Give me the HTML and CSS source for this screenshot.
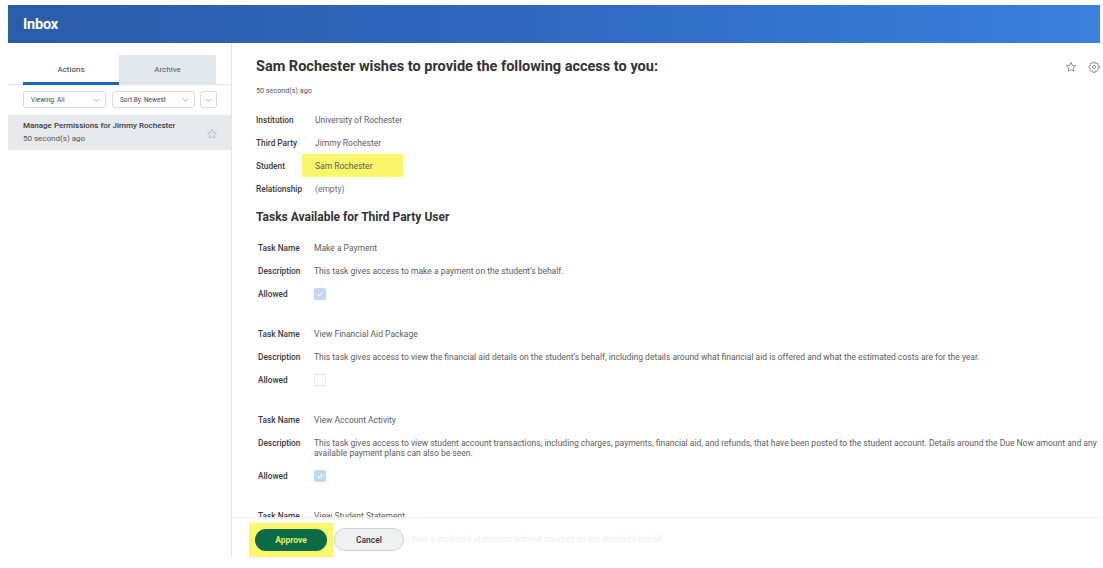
FILE: index.html
```html
<!DOCTYPE html>
<html>
<head>
<meta charset="utf-8">
<link rel="stylesheet" href="styles.css">
</head>
<body>
<div class="frame">
  <header class="topbar"><span class="brand">Inbox</span></header>
  <div class="layout">
    <aside class="sidebar">
      <div class="tabs">
        <div class="tab active">Actions</div>
        <div class="tab">Archive</div>
      </div>
      <div class="filters">
        <div class="select wide"><span>Viewing: All</span><svg viewBox="0 0 10 6"><path d="M1 1l4 4 4-4"/></svg></div>
        <div class="select wide"><span>Sort By: Newest</span><svg viewBox="0 0 10 6"><path d="M1 1l4 4 4-4"/></svg></div>
        <div class="select small"><svg viewBox="0 0 10 6"><path d="M1 1l4 4 4-4"/></svg></div>
      </div>
      <div class="item">
        <div class="item-text">
          <div class="item-title">Manage Permissions for Jimmy Rochester</div>
          <div class="item-sub">50 second(s) ago</div>
        </div>
        <svg class="star" viewBox="0 0 24 24"><path d="M12 2.8l2.8 6.1 6.6.6-5 4.4 1.5 6.5L12 17l-5.9 3.4 1.5-6.5-5-4.4 6.6-.6z"/></svg>
      </div>
    </aside>
    <main class="main">
      <div class="title-row">
        <h1 class="title">Sam Rochester wishes to provide the following access to you:</h1>
        <div class="tools">
          <svg class="tool" viewBox="0 0 24 24"><path d="M12 2.8l2.8 6.1 6.6.6-5 4.4 1.5 6.5L12 17l-5.9 3.4 1.5-6.5-5-4.4 6.6-.6z"/></svg>
          <svg class="tool" viewBox="0 0 24 24"><path d="M10.3 2h3.4l.5 2.6 1.8.8 2.2-1.5 2.4 2.4-1.5 2.2.8 1.8 2.6.5v3.4l-2.6.5-.8 1.8 1.5 2.2-2.4 2.4-2.2-1.5-1.8.8-.5 2.6h-3.4l-.5-2.6-1.8-.8-2.2 1.5-2.4-2.4 1.5-2.2-.8-1.8L2 13.7v-3.4l2.6-.5.8-1.8-1.5-2.2 2.4-2.4 2.2 1.5 1.8-.8z"/><circle cx="12" cy="12" r="3.2"/></svg>
        </div>
      </div>
      <div class="time">50 second(s) ago</div>
      <div class="fields">
        <div class="row"><div class="label">Institution</div><div class="value">University of Rochester</div></div>
        <div class="row"><div class="label">Third Party</div><div class="value">Jimmy Rochester</div></div>
        <div class="row"><div class="label">Student</div><div class="value"><span class="hl">Sam Rochester</span></div></div>
        <div class="row"><div class="label">Relationship</div><div class="value muted">(empty)</div></div>
      </div>
      <h2 class="subtitle">Tasks Available for Third Party User</h2>
      <div class="task">
        <div class="row"><div class="label">Task Name</div><div class="value">Make a Payment</div></div>
        <div class="row"><div class="label">Description</div><div class="value">This task gives access to make a payment on the student’s behalf.</div></div>
        <div class="row"><div class="label">Allowed</div><div class="value"><span class="check on"><svg viewBox="0 0 12 12"><path d="M3.2 6.3l1.9 1.9 3.8-4.2"/></svg></span></div></div>
      </div>
      <div class="task">
        <div class="row"><div class="label">Task Name</div><div class="value">View Financial Aid Package</div></div>
        <div class="row"><div class="label">Description</div><div class="value">This task gives access to view the financial aid details on the student’s behalf, including details around what financial aid is offered and what the estimated costs are for the year.</div></div>
        <div class="row"><div class="label">Allowed</div><div class="value"><span class="check"></span></div></div>
      </div>
      <div class="task">
        <div class="row"><div class="label">Task Name</div><div class="value">View Account Activity</div></div>
        <div class="row"><div class="label">Description</div><div class="value">This task gives access to view student account transactions, including charges, payments, financial aid, and refunds, that have been posted to the student account. Details around the Due Now amount and any available payment plans can also be seen.</div></div>
        <div class="row"><div class="label">Allowed</div><div class="value"><span class="check on"><svg viewBox="0 0 12 12"><path d="M3.2 6.3l1.9 1.9 3.8-4.2"/></svg></span></div></div>
      </div>
      <div class="task">
        <div class="row"><div class="label">Task Name</div><div class="value">View Student Statement</div></div>
        <div class="row"><div class="label">Description</div><div class="value">This task gives access to view a student’s statement without courses on the student’s behalf.</div></div>
      </div>
      <div class="footer">
        <span class="btn-hl"><button class="btn approve">Approve</button></span>
        <button class="btn cancel">Cancel</button>
      </div>
    </main>
  </div>
</div>
</body>
</html>
```
FILE: styles.css
```css
* { box-sizing: border-box; }
html, body { margin: 0; padding: 0; background: #fff; }
body {
  width: 1103px;
  height: 568px;
  overflow: hidden;
  font-family: Roboto, "Liberation Sans", sans-serif;
  color: #333;
}
.frame {
  margin: 5px 3px 0 8px;
  height: 552px;
  overflow: hidden;
  display: flex;
  flex-direction: column;
}
.topbar {
  height: 38px;
  flex: none;
  background: linear-gradient(90deg, #2b5ca9 0%, #3067bd 45%, #3a80dd 100%);
  display: flex;
  align-items: center;
  padding-left: 15px;
}
.brand {
  color: #fff;
  font-weight: 700;
  font-size: 14.5px;
  letter-spacing: -0.2px;
}
.layout {
  flex: 1;
  display: flex;
  min-height: 0;
}
.sidebar {
  width: 224px;
  flex: none;
  border-right: 1px solid #e6e6e6;
  padding-top: 12px;
}
.tabs {
  display: flex;
  padding-left: 15px;
  border-bottom: 1px solid #e4e6e8;
  height: 30px;
}
.tab {
  width: 97px;
  height: 29px;
  display: flex;
  align-items: center;
  justify-content: center;
  font-size: 8px;
  color: #555;
  background: #e3e8ec;
}
.tab.active {
  background: #fff;
  color: #333;
  border-bottom: 3px solid #1763c6;
  padding-top: 1px;
  width: 96px;
  height: 30px;
}
.filters {
  display: flex;
  gap: 6px;
  padding-left: 15px;
  margin-top: 6px;
}
.select {
  height: 17px;
  border: 1px solid #dcdcdc;
  border-radius: 3px;
  display: flex;
  align-items: center;
  justify-content: space-between;
  padding: 0 5px 0 7px;
  font-size: 6.5px;
  color: #444;
  background: #fff;
}
.select.wide { width: 83px; }
.select.small { width: 17px; padding: 0; justify-content: center; margin-left: -1px; }
.select svg { width: 7px; height: 4px; fill: none; stroke: #888; stroke-width: 1; }
.item {
  margin-top: 7px;
  height: 35px;
  background: #e7eaed;
  display: flex;
  align-items: center;
  justify-content: space-between;
  padding: 0 13px 0 15px;
}
.item-title { font-size: 8px; font-weight: 500; color: #3a3a3a; line-height: 12px; margin-top: -1px; }
.item-sub { font-size: 8px; color: #555; line-height: 13px; }
.star { width: 12px; height: 12px; fill: none; stroke: #aaa; stroke-width: 1.3; margin-top: 2px; }
.main {
  flex: 1;
  position: relative;
  padding: 12px 0 0 24px;
  min-width: 0;
}
.title-row {
  display: flex;
  justify-content: space-between;
  align-items: center;
  height: 22px;
}
.title {
  margin: 0;
  font-size: 14.5px;
  font-weight: 700;
  color: #333;
}
.tools { display: flex; gap: 11px; align-items: center; padding-top: 1px; }
.tool { width: 12px; height: 12px; fill: none; stroke: #666; stroke-width: 1.4; }
.time {
  font-size: 7.2px;
  color: #555;
  margin-top: 9px;
  line-height: 10px;
}
.fields { margin-top: 12px; }
.row {
  display: flex;
  padding: 6.5px 0;
  line-height: 10px;
}
.label {
  width: 59px;
  flex: none;
  font-size: 8.3px;
  font-weight: 500;
  color: #3a3a3a;
}
.value {
  font-size: 8.5px;
  color: #5c5c5c;
  flex: 1;
  padding-right: 3px;
}
.value.muted { color: #6a6f78; }
.hl {
  background: #fbf76c;
  display: inline-block;
  padding: 6.5px 30px 6.5px 13px;
  margin: -6.5px 0 -6.5px -13px;
}
.subtitle {
  margin: 9px 0 11px;
  font-size: 12px;
  font-weight: 700;
  color: #333;
  line-height: 16px;
}
.task { padding-left: 2px; margin-bottom: 16px; }
.task .label { width: 56px; }
.check {
  display: inline-block;
  width: 12px;
  height: 12px;
  border-radius: 2px;
  border: 1px solid #e3e5e8;
  vertical-align: middle;
  margin-top: -1px;
}
.check.on {
  background: #c0d9f6;
  border-color: #c0d9f6;
}
.check svg { width: 100%; height: 100%; fill: none; stroke: #fff; stroke-width: 1.4; display: block; }
.footer {
  position: absolute;
  left: 0;
  right: 0;
  top: 474px;
  bottom: 0;
  background: rgba(255, 255, 255, 0.88);
  border-top: 1px solid #ececec;
  display: flex;
  align-items: flex-start;
  padding: 5px 0 0 17px;
}
.btn-hl {
  background: #fbf76c;
  padding: 6px;
  display: flex;
}
.btn {
  font-family: Roboto, "Liberation Sans", sans-serif;
  font-size: 8.5px;
  font-weight: 700;
  border-radius: 11px;
  height: 22px;
  cursor: pointer;
}
.approve {
  width: 72px;
  background: #0b6a47;
  color: #e5ee5c;
  border: none;
}
.cancel {
  width: 70px;
  margin-top: 5px;
  height: 23px;
  margin-left: 1px;
  background: #eef0f2;
  color: #333;
  border: 1px solid #cfd3d6;
  font-weight: 500;
}
```
